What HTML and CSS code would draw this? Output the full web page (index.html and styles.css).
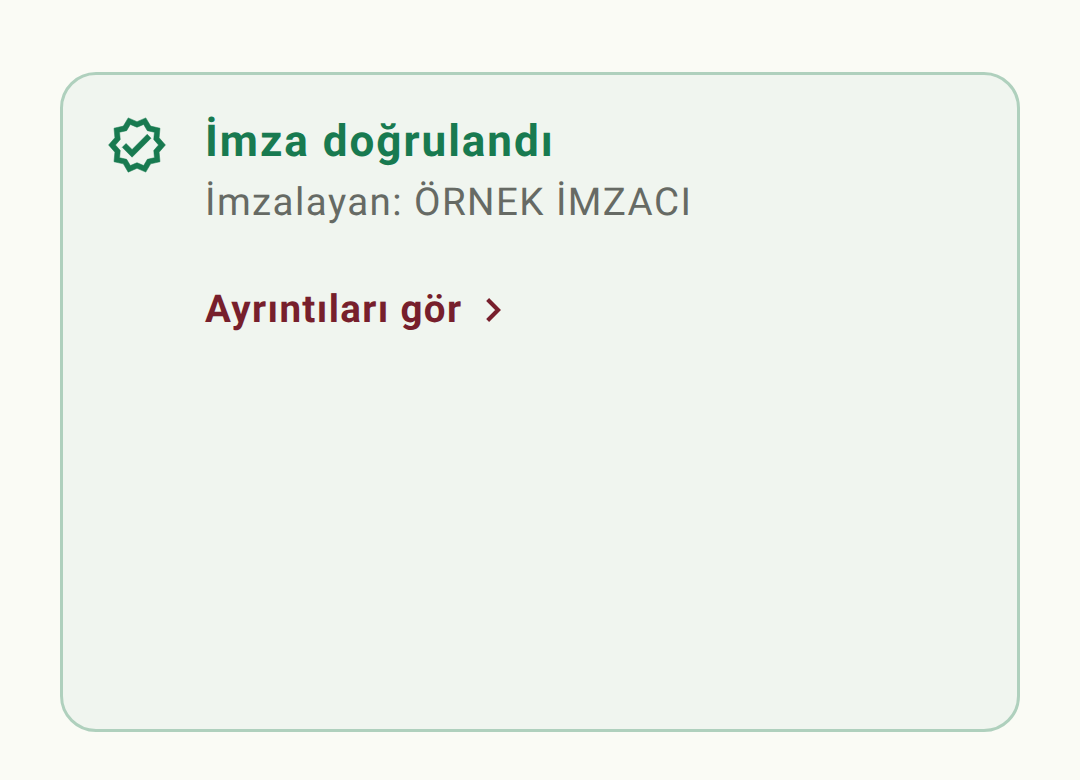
FILE: index.html
```html
<!DOCTYPE html>
<html lang="tr">
<head>
    <meta charset="UTF-8">
    <title>İmza doğrulandı</title>
    <link rel="stylesheet" href="styles.css">
</head>
<body>
    <div class="card">
        <svg class="verified-icon" viewBox="0 0 24 24">
            <path d="M23 11.99l-2.44-2.79.34-3.69-3.61-.82L15.4 1.5 12 2.96 8.6 1.5 6.71 4.69 3.1 5.5l.34 3.7L1 11.99l2.44 2.79-.34 3.7 3.61.82 1.89 3.2 3.4-1.47 3.4 1.46 1.89-3.19 3.61-.82-.34-3.69L23 11.99zm-3.95 1.48l-.56.65.08.85.18 1.95-1.9.43-.84.19-.44.74-.99 1.68-1.78-.77-.8-.34-.79.34-1.78.77-.99-1.67-.44-.74-.84-.19-1.9-.43.18-1.96.08-.85-.56-.65L3.67 12l1.29-1.48.56-.65-.09-.86-.18-1.94 1.9-.43.84-.19.44-.74.99-1.68 1.78.77.8.34.79-.34 1.78-.77.99 1.68.44.74.84.19 1.9.43-.18 1.95-.08.85.56.65 1.29 1.47-1.28 1.48z"/>
            <path d="M10.09 13.75l-2.32-2.33-1.48 1.49 3.8 3.81 7.34-7.36-1.48-1.49z"/>
        </svg>
        <div class="card-body">
            <h1 class="title">İmza doğrulandı</h1>
            <p class="signer">İmzalayan: ÖRNEK İMZACI</p>
            <a class="details" href="#">
                <span>Ayrıntıları gör</span>
                <svg class="chevron" viewBox="0 0 24 24">
                    <path d="M8.6 5.4 15.2 12l-6.6 6.6"/>
                </svg>
            </a>
        </div>
    </div>
</body>
</html>
```

FILE: styles.css
```css
body {
    margin: 0;
    height: 780px;
    padding: 72px 60px 48px 60px;
    box-sizing: border-box;
    background-color: #fafbf5;
    font-family: Roboto, sans-serif;
    text-rendering: geometricPrecision;
    overflow: hidden;
}
.card {
    display: flex;
    gap: 37px;
    height: 660px;
    padding: 39px 42px 39px 43px;
    box-sizing: border-box;
    background-color: #f0f5ef;
    border: 3px solid #afd0bd;
    border-radius: 36px;
}
.verified-icon {
    width: 62px;
    height: 62px;
    flex-shrink: 0;
    fill: #187a50;
    stroke: #187a50;
    stroke-width: 0.2;
}
.card-body {
    display: flex;
    flex-direction: column;
    align-items: flex-start;
}
.title {
    margin: 1px 0 0;
    font-size: 44px;
    line-height: 52px;
    font-weight: 700;
    letter-spacing: 1.98px;
    color: #187a50;
}
.signer {
    margin: 10px 0 0;
    font-size: 38.5px;
    line-height: 52px;
    letter-spacing: 1.43px;
    color: #666a64;
}
.details {
    display: flex;
    align-items: center;
    gap: 12px;
    margin-top: 56px;
    font-size: 38.5px;
    line-height: 50px;
    font-weight: 700;
    letter-spacing: 1.375px;
    color: #771f2c;
    text-decoration: none;
}
.chevron {
    width: 38px;
    height: 38px;
    fill: none;
    stroke: #771f2c;
    stroke-width: 2.6;
}
```
